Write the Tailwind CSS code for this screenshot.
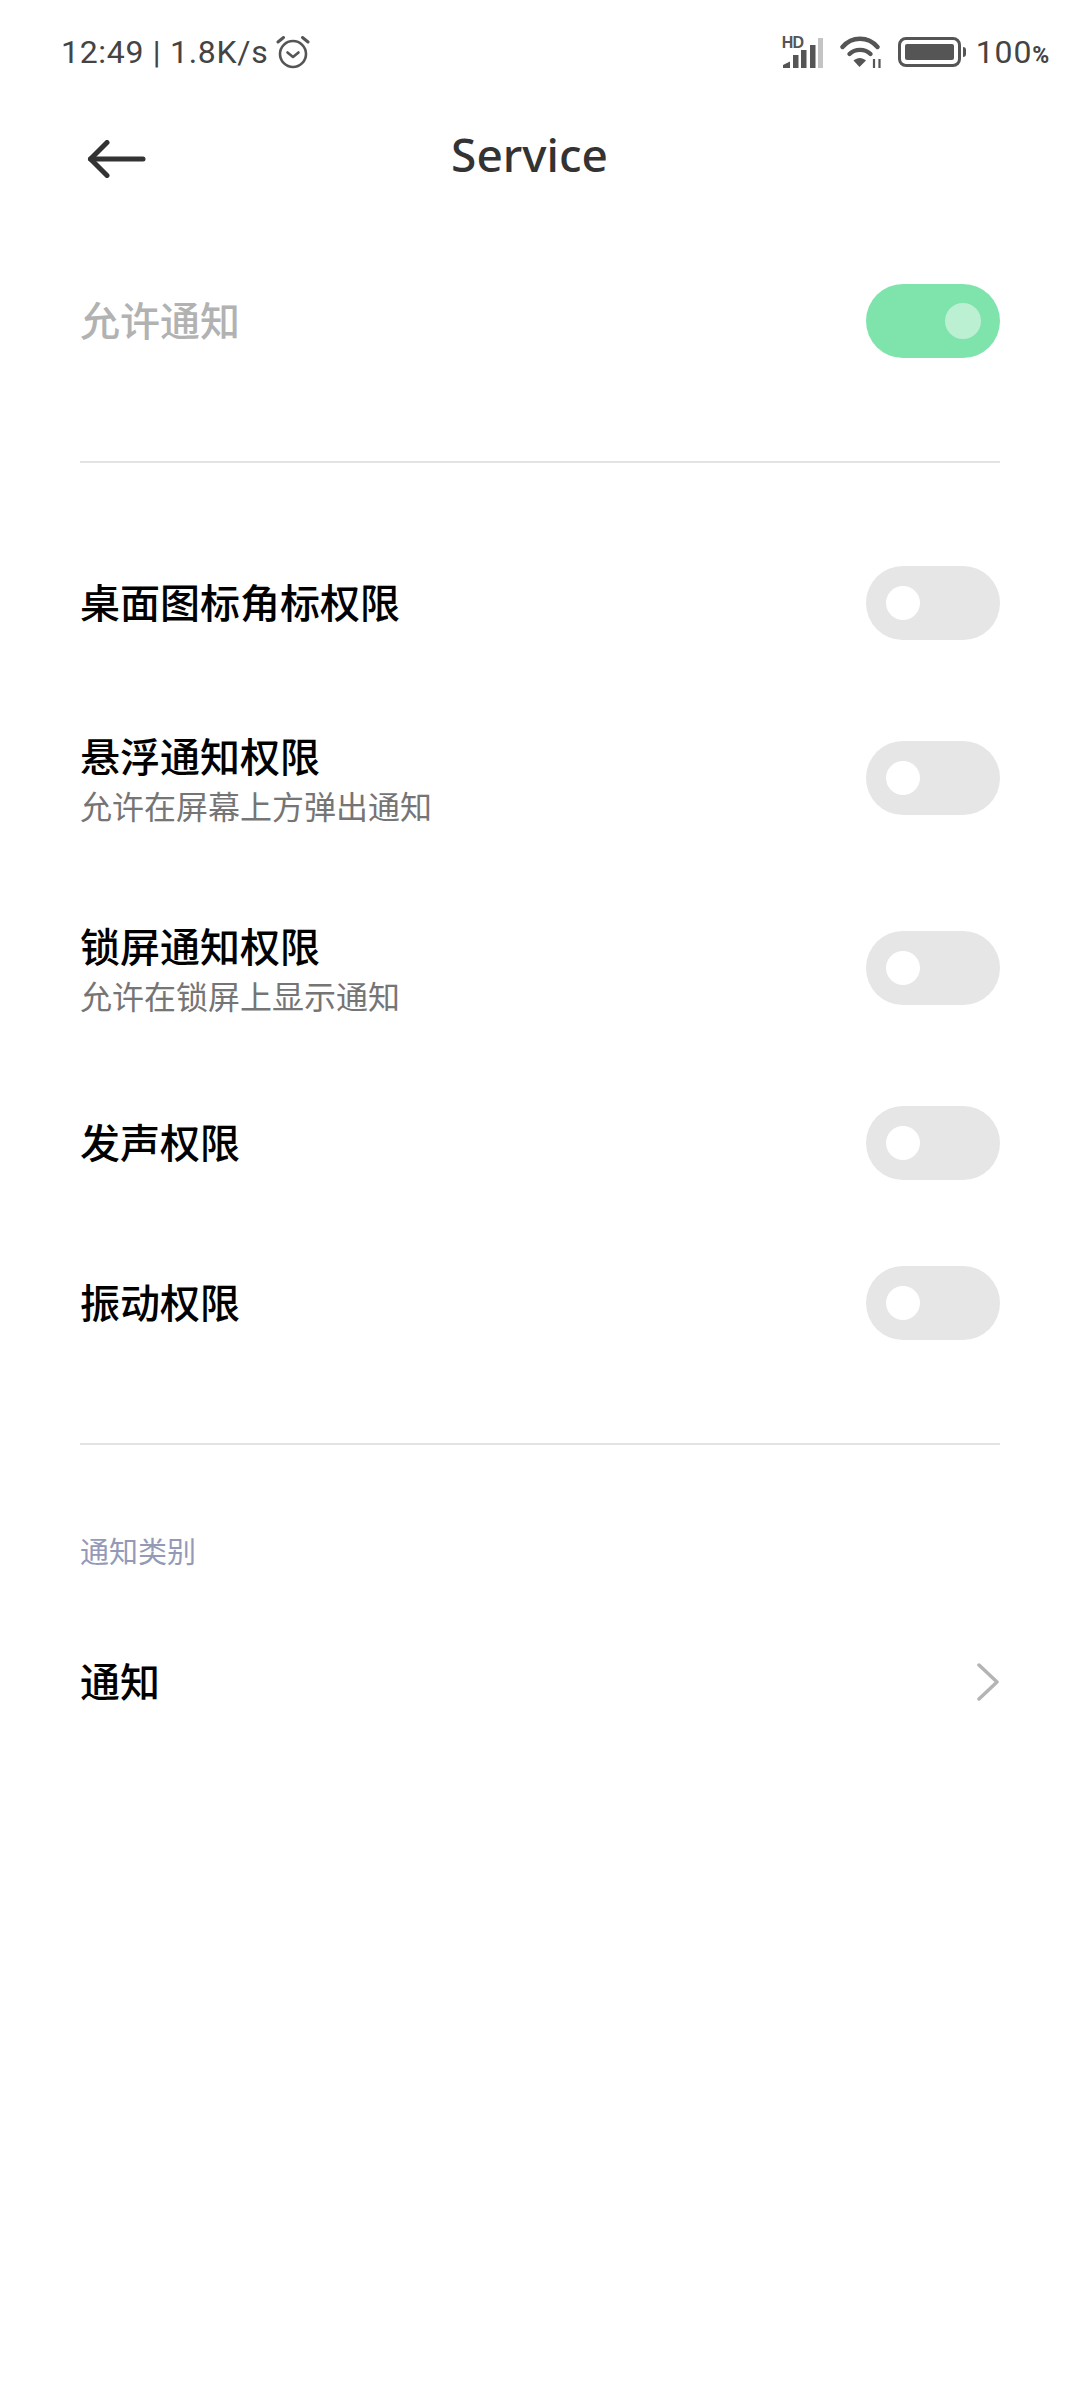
<!DOCTYPE html>
<html lang="zh-CN">
<head>
  <meta charset="UTF-8" />
  <meta name="viewport" content="width=device-width, initial-scale=1.0"/>
  <title>Service</title>
  <script src="https://cdn.jsdelivr.net/npm/@tailwindcss/browser@4"></script>
</head>
<body class="bg-white font-['Noto_Sans','Noto_Sans_CJK_SC',sans-serif]">
  <div class="w-[1080px] h-[2400px] overflow-hidden flex flex-col">

    <!-- status bar -->
    <div class="h-[104px] flex items-center justify-between pl-[61px] pr-[30px] text-[#444444]">
      <div class="flex items-center">
        <span class="font-['Roboto',sans-serif] text-[32px] leading-none tracking-[0.7px]">12:49 | 1.8K/s</span>
        <svg class="ml-[8px] w-[34px] h-[34px]" viewBox="0 0 34 34" fill="none" stroke="#555555" stroke-width="2.6" stroke-linecap="round" stroke-linejoin="round">
          <circle cx="17" cy="19" r="13" />
          <path d="M11.5 17.5 17 22 22.5 17.5" />
          <path d="M2 7 7.5 2.5" stroke-width="3" />
          <path d="M32 7 26.5 2.5" stroke-width="3" />
        </svg>
      </div>
      <div class="flex items-center">
        <div class="relative w-[41px] h-[31px]">
          <span class="absolute left-0 top-[-2px] text-[16px] leading-[16px] tracking-[-1px] font-bold font-['Liberation_Sans',sans-serif] text-[#555555]">HD</span>
          <svg class="absolute left-0 top-0 w-[41px] h-[31px]" viewBox="0 0 41 31" fill="#555555">
            <path d="M1 31V28L8 24.5V31Z" />
            <rect x="11" y="18" width="5.5" height="13" />
            <rect x="19" y="13" width="5.5" height="18" />
            <rect x="28" y="8" width="5.5" height="23" />
            <rect x="36" y="1" width="5" height="30" fill="#c4c4c4" />
          </svg>
        </div>
        <svg class="ml-[17px] w-[42px] h-[33px]" viewBox="0 0 42 33" fill="none" stroke="#555555" stroke-width="4.4" stroke-linecap="round">
          <path d="M2.5 11C12 0 28 0 37.5 11" />
          <path d="M9.5 18C15 12.5 25 12.5 30.5 18" />
          <path d="M13.5 24.5 19.5 31 26 24.5C22 21 17.5 21 13.5 24.5Z" fill="#555555" stroke="none" />
          <path d="M34 23V32M39.5 23V32" stroke-width="2.2" stroke-linecap="butt" />
        </svg>
        <div class="ml-[16px] flex items-center">
          <div class="w-[63px] h-[30px] border-[3px] border-[#555555] rounded-[8px] p-[4px]">
            <div class="w-full h-full bg-[#555555] rounded-[2px]"></div>
          </div>
          <div class="ml-[2px] w-[3px] h-[10px] bg-[#555555] rounded-r-full"></div>
        </div>
        <span class="ml-[10px] font-['Roboto',sans-serif] text-[32px] leading-none tracking-[0.8px] text-[#444444]">100<span class="text-[23px] font-bold">%</span></span>
      </div>
    </div>

    <!-- header -->
    <div class="relative h-[106px] flex items-center justify-center">
      <svg class="absolute left-[85px] top-[36px] w-[62px] h-[38px]" viewBox="0 0 62 38" fill="none" stroke="#333333" stroke-width="5" stroke-linecap="round" stroke-linejoin="round">
        <path d="M22 2.5 5.5 19 22 35.5" />
        <path d="M5.5 19H58" />
      </svg>
      <h1 class="ml-[-21px] mb-[6px] text-[46px] leading-none font-medium text-[#333333]">Service</h1>
    </div>

    <div class="px-[80px]">
      <!-- allow notifications -->
      <div class="mt-[31px] h-[160px] flex items-center justify-between">
        <span class="text-[40px] font-medium text-[#b2b2b2]">允许通知</span>
        <div class="w-[134px] h-[74px] rounded-full bg-[#7fe4ac] flex items-center justify-end pr-[19px]">
          <div class="w-[36px] h-[36px] rounded-full bg-[#bbf0d3]"></div>
        </div>
      </div>
      <div class="mt-[60px] h-[2px] bg-[#e3e3e3]"></div>

      <!-- permissions -->
      <div class="mt-[60px] h-[160px] flex items-center justify-between">
        <span class="text-[40px] font-medium text-black">桌面图标角标权限</span>
        <div class="w-[134px] h-[74px] rounded-full bg-[#e6e6e6] flex items-center pl-[20px]">
          <div class="w-[34px] h-[34px] rounded-full bg-white"></div>
        </div>
      </div>
      <div class="h-[190px] flex items-center justify-between">
        <div class="pt-[8px]">
          <div class="text-[40px] leading-[50px] font-medium text-black">悬浮通知权限</div>
          <div class="text-[32px] leading-[50px] text-[#757575]">允许在屏幕上方弹出通知</div>
        </div>
        <div class="w-[134px] h-[74px] rounded-full bg-[#e6e6e6] flex items-center pl-[20px]">
          <div class="w-[34px] h-[34px] rounded-full bg-white"></div>
        </div>
      </div>
      <div class="h-[190px] flex items-center justify-between">
        <div class="pt-[8px]">
          <div class="text-[40px] leading-[50px] font-medium text-black">锁屏通知权限</div>
          <div class="text-[32px] leading-[50px] text-[#757575]">允许在锁屏上显示通知</div>
        </div>
        <div class="w-[134px] h-[74px] rounded-full bg-[#e6e6e6] flex items-center pl-[20px]">
          <div class="w-[34px] h-[34px] rounded-full bg-white"></div>
        </div>
      </div>
      <div class="h-[160px] flex items-center justify-between">
        <span class="text-[40px] font-medium text-black">发声权限</span>
        <div class="w-[134px] h-[74px] rounded-full bg-[#e6e6e6] flex items-center pl-[20px]">
          <div class="w-[34px] h-[34px] rounded-full bg-white"></div>
        </div>
      </div>
      <div class="h-[160px] flex items-center justify-between">
        <span class="text-[40px] font-medium text-black">振动权限</span>
        <div class="w-[134px] h-[74px] rounded-full bg-[#e6e6e6] flex items-center pl-[20px]">
          <div class="w-[34px] h-[34px] rounded-full bg-white"></div>
        </div>
      </div>
      <div class="mt-[60px] h-[2px] bg-[#e3e3e3]"></div>

      <!-- category -->
      <div class="mt-[87px] text-[29px] leading-[40px] text-[#9499b7]">通知类别</div>
      <div class="mt-[80px] h-[60px] flex items-center justify-between">
        <span class="text-[40px] font-medium text-black">通知</span>
        <svg class="mr-[1px] w-[22px] h-[38px]" viewBox="0 0 22 38" fill="none" stroke="#b4b4b4" stroke-width="3.5" stroke-linecap="round" stroke-linejoin="round">
          <path d="M2 2 20 19 2 36" />
        </svg>
      </div>
    </div>
  </div>
</body>
</html>
